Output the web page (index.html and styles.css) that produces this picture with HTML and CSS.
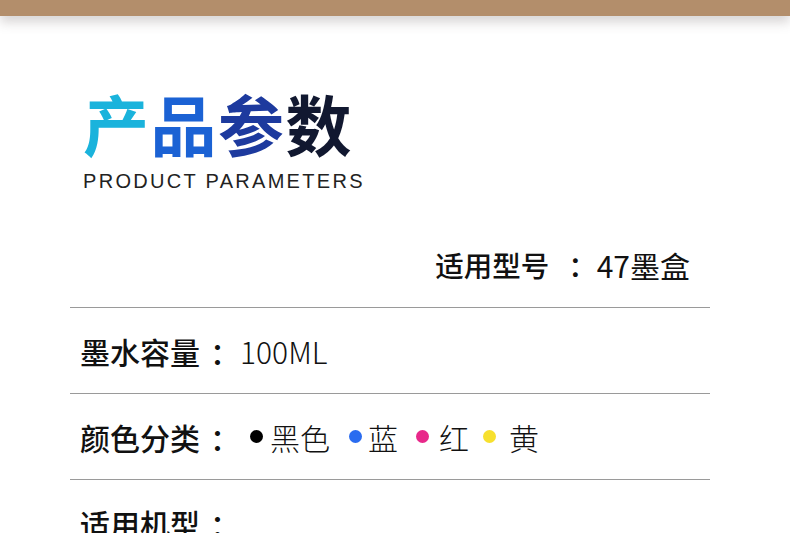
FILE: index.html
```html
<!DOCTYPE html>
<html lang="zh-CN">
<head>
    <meta charset="UTF-8">
    <meta name="viewport" content="width=device-width, initial-scale=1.0">
    <title>产品参数</title>
    <link rel="stylesheet" href="styles.css">
</head>
<body>
    <div class="top-bar"></div>
    <div class="heading">
        <h1 class="title">
            <span class="c1">产</span><span class="c2">品</span><span class="c3">参</span><span class="c4">数</span>
        </h1>
        <p class="subtitle">PRODUCT PARAMETERS</p>
    </div>
    <div class="params">
        <div class="row row-right">
            <span class="label">适用型号<span class="colon">：</span></span>
            <span class="value">47墨盒</span>
        </div>
        <div class="row">
            <span class="label">墨水容量<span class="colon">：</span></span>
            <span class="value light">100ML</span>
        </div>
        <div class="row">
            <span class="label">颜色分类<span class="colon">：</span></span>
            <span class="colors">
                <span class="dot black"></span><span class="name">黑色</span>
                <span class="dot blue"></span><span class="name">蓝</span>
                <span class="dot pink"></span><span class="name">红</span>
                <span class="dot yellow"></span><span class="name">黄</span>
            </span>
        </div>
        <div class="row last">
            <span class="label">适用机型<span class="colon">：</span></span>
        </div>
    </div>
</body>
</html>
```

FILE: styles.css
```css
* {
    box-sizing: border-box;
    padding: 0;
    margin: 0;
}
body {
    width: 790px;
    height: 533px;
    overflow: hidden;
    background: #fff;
    font-family: "Noto Sans CJK SC", "Noto Sans", sans-serif;
    color: #111;
}
.top-bar {
    height: 16px;
    background: #b38e6b;
    box-shadow: 0 6px 12px rgba(90, 80, 80, 0.25);
}
.heading {
    padding: 68px 0 0 83px;
}
.title {
    display: flex;
    font-size: 66px;
    line-height: 76px;
    font-weight: 700;
    letter-spacing: 1.5px;
}
.c1 { color: #1ab3dc; }
.c2 { color: #1b62d4; }
.c3 { color: #1d3a9e; }
.c4 { color: #111830; }
.subtitle {
    margin-top: 9px;
    font-family: "Liberation Sans", Arial, sans-serif;
    font-size: 20px;
    line-height: 24px;
    letter-spacing: 2.3px;
    color: #222;
}
.params {
    margin: 29px 80px 0 70px;
}
.row {
    display: flex;
    align-items: center;
    height: 86px;
    padding: 0 10px;
    border-bottom: 1px solid #9a9a9a;
    font-size: 30px;
}
.row-right {
    justify-content: flex-end;
    padding-right: 20px;
}
.row-right .label {
    font-size: 28.5px;
}
.row.last {
    border-bottom: none;
}
.label {
    font-weight: 500;
}
.colon {
    padding-left: 10px;
}
.row-right .colon {
    padding-left: 19px;
}
.value {
    font-weight: 400;
}
.value.light {
    font-weight: 300;
}
.colors {
    display: flex;
    align-items: center;
    font-weight: 300;
}
.dot {
    width: 13px;
    height: 13px;
    border-radius: 50%;
}
.dot.black { background: #000; margin: 0 7px 0 10px; }
.dot.blue { background: #2a6cf0; margin: 0 6px 0 19px; }
.dot.pink { background: #e8288a; margin: 0 10px 0 18px; }
.dot.yellow { background: #f7e02e; margin: 0 13px 0 14px; }
```
